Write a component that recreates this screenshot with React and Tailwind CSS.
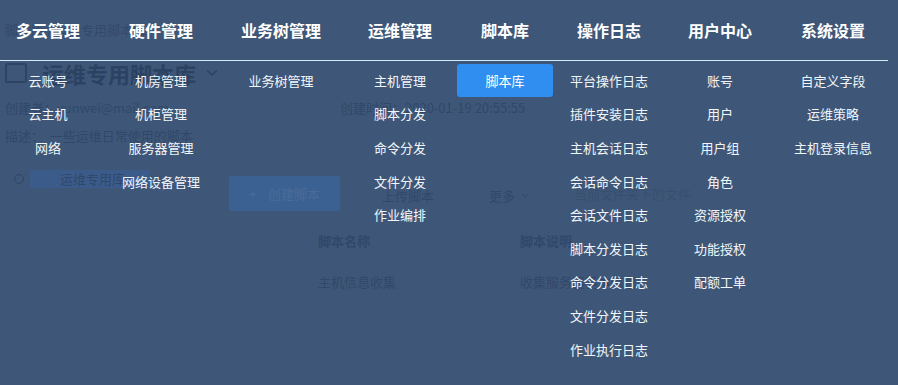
import React from "react";

const cols = [
  { title: "多云管理", cls: "w-[96px]", items: ["云账号", "云主机", "网络"] },
  { title: "硬件管理", cls: "w-[130px]", items: ["机房管理", "机柜管理", "服务器管理", "网络设备管理"] },
  { title: "业务树管理", cls: "w-[110px]", items: ["业务树管理"] },
  { title: "运维管理", cls: "w-[121px] pl-[7px]", items: ["主机管理", "脚本分发", "命令分发", "文件分发", "作业编排"] },
  { title: "脚本库", cls: "w-[96px]", items: ["脚本库"], active: 0 },
  {
    title: "操作日志",
    cls: "w-[112px]",
    items: ["平台操作日志", "插件安装日志", "主机会话日志", "会话命令日志", "会话文件日志", "脚本分发日志", "命令分发日志", "文件分发日志", "作业执行日志"],
  },
  { title: "用户中心", cls: "w-[110px]", items: ["账号", "用户", "用户组", "角色", "资源授权", "功能授权", "配额工单"] },
  { title: "系统设置", cls: "w-[116px]", items: ["自定义字段", "运维策略", "主机登录信息"] },
];

export default function App() {
  return (
    <div className="relative w-[898px] h-[385px] overflow-hidden bg-[#3e5778] font-['Noto_Sans_CJK_SC',_'Noto_Sans',_sans-serif]">
      {/* dimmed page underneath */}
      <div className="text-[#31486a] text-[13px] leading-[18px]">
        <div className="pl-[5px] pt-[21px] text-[#34496b]">脚本库 / 运维专用脚本库</div>
        <div className="mt-[21px] h-[26px] pl-[5px] flex items-center">
          <div className="w-[22px] h-[20px] border-2 border-[#2e4464] rounded-[2px]" />
          <div className="ml-[15px] text-[22px] leading-[26px] font-bold text-[#2c4263]">运维专用脚本库</div>
          <svg className="ml-[10px]" width="12" height="8" viewBox="0 0 12 8">
            <path d="M1 1l5 5 5-5" stroke="#2e4464" strokeWidth="1.6" fill="none" />
          </svg>
        </div>
        <div className="mt-[13px] h-[18px] flex pl-[5px]">
          <div className="w-[335px]">创建者：yunwei@mail.com</div>
          <div>创建时间：2020-01-19 20:55:55</div>
        </div>
        <div className="mt-[10px] h-[18px] pl-[5px]">描述：&nbsp;&nbsp;一些运维日常使用的脚本</div>
        <div className="mt-[12px] flex">
          <div className="w-[215px] pt-[13px] pl-[14px] flex items-start">
            <div className="w-[10px] h-[10px] mt-[4px] rounded-full border border-[#2f4566]" />
            <div className="ml-[6px] w-[120px] h-[18px] bg-[#3b5c8a] pl-[30px] text-[#31486a]">运维专用库</div>
          </div>
          <div className="flex-1">
            <div className="pt-[19px] flex items-center pl-[14px]">
              <div className="w-[111px] h-[35px] rounded-[3px] bg-[#3b6192] flex items-center justify-center text-[#4a6c99]">
                <span className="mr-[12px]">+</span>创建脚本
              </div>
              <div className="ml-[42px] mt-[4px]">上传脚本</div>
              <div className="ml-[55px] mt-[4px] flex items-center">
                更多
                <svg className="ml-[6px]" width="8" height="5" viewBox="0 0 8 5">
                  <path d="M1 1l3 3 3-3" stroke="#31486a" strokeWidth="1" fill="none" />
                </svg>
              </div>
              <div className="ml-[45px] text-[#384f70]">当前文件夹下的文件</div>
            </div>
            <div className="mt-[21px] flex pl-[103px] font-bold">
              <div className="w-[202px]">脚本名称</div>
              <div>脚本说明</div>
            </div>
            <div className="mt-[23px] flex pl-[103px]">
              <div className="w-[202px]">主机信息收集</div>
              <div>收集服务器基本信息</div>
            </div>
          </div>
        </div>
      </div>

      {/* mega menu overlay */}
      <div className="absolute inset-0 text-white">
        <div className="w-[888px] h-[61px] flex items-center pb-[1px] border-b border-[#d6e9fb]">
          {cols.map((c) => (
            <div key={c.title} className={`${c.cls} shrink-0 text-center text-[16px] leading-[20px] font-bold`}>
              {c.title}
            </div>
          ))}
        </div>
        <div className="flex pt-[3px]">
          {cols.map((c) => (
            <div key={c.title} className={`${c.cls} shrink-0 flex flex-col items-stretch`}>
              {c.items.map((it, i) => (
                <div key={it} className="h-[33.6px] flex items-center justify-center">
                  {c.active === i ? (
                    <div className="w-full h-[33px] rounded-[3px] bg-[#2f8ef0] flex items-center justify-center text-[13px] text-white">
                      {it}
                    </div>
                  ) : (
                    <span className="text-[13px] leading-[18px] text-[#f2f6fa]">{it}</span>
                  )}
                </div>
              ))}
            </div>
          ))}
        </div>
      </div>
    </div>
  );
}
